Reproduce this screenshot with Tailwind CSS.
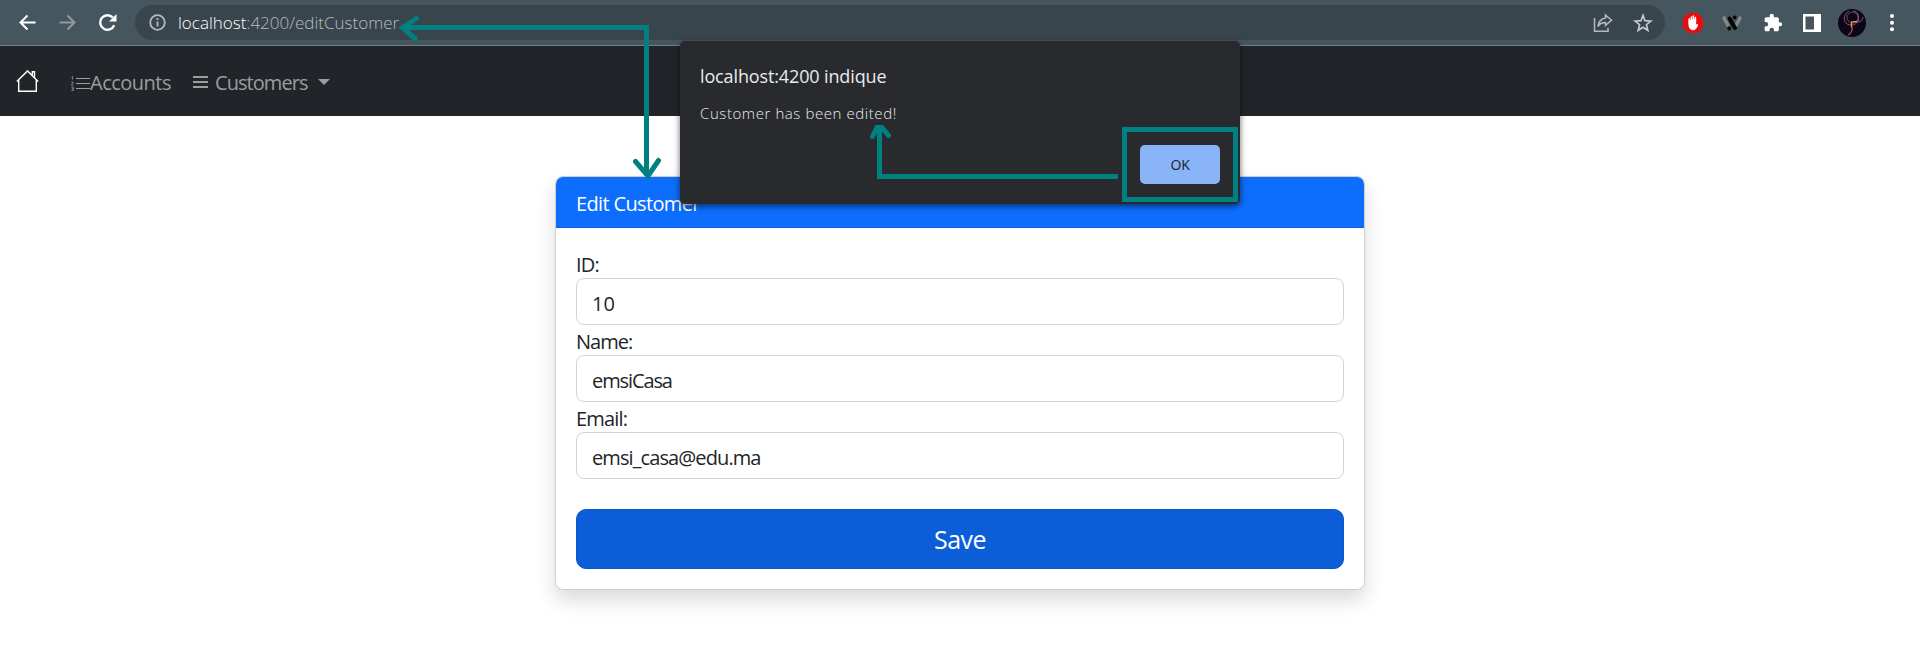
<!DOCTYPE html>
<html lang="en">
<head>
<meta charset="utf-8">
<title>Edit Customer</title>
<script src="https://cdn.jsdelivr.net/npm/@tailwindcss/browser@4"></script>
</head>
<body class="relative h-[667px] w-[1920px] overflow-hidden bg-white font-['Open_Sans','Noto_Sans',sans-serif] text-[#212529]">

<!-- Browser toolbar -->
<header class="flex h-[46px] items-start border-b border-[#6d8288] bg-[#45565f] pt-[5px]">
  <div class="flex h-[35px] w-[135px] items-center pl-[17px]">
    <svg class="h-5 w-5" viewBox="0 0 20 20" fill="none" stroke="#fff" stroke-width="2"><path d="M18.500 9.500H3.500M10.500 2.500L3.500 9.500l7 7"/></svg>
    <svg class="ml-5 h-5 w-5" viewBox="0 0 20 20" fill="none" stroke="#8f999e" stroke-width="2"><path d="M2.500 9.500H17.500M10.500 2.500l7 7-7 7"/></svg>
    <svg class="ml-5 h-5 w-5" viewBox="0 0 20 20" fill="none" stroke="#fff" stroke-width="2.400"><path d="M17.200 12.300A7.300 7.300 0 1 1 15.700 4.400"/><path d="M19.500 1v7.500H12z" fill="#fff" stroke="none"/></svg>
  </div>
  <div class="flex h-[35px] w-[1530px] items-center rounded-full bg-[#39454c] pr-3 pl-[14px]">
    <svg class="h-[17px] w-[17px]" viewBox="0 0 17 17" fill="none" stroke="#b4babd" stroke-width="1.800"><circle cx="8.500" cy="8.500" r="7.300"/><path d="M8.500 7.500v5M8.500 4v2"/></svg>
    <div class="ml-[12px] text-[17px] leading-[35px] font-light whitespace-nowrap text-[#b5bcbf]"><span class="text-white">localhost</span>:4200/editCustomer</div>
    <svg class="ml-auto h-5 w-5" viewBox="0 0 20 20" fill="none" stroke="#b5bbbe" stroke-width="1.500"><path d="M1.500 5v13.200H15v-3.500"/><path d="M12.500 2l6 5.200-6 5.200V9.600C9 9.500 6.500 11 5 13.500 5.500 9 8 5.700 12.500 5z"/></svg>
    <svg class="ml-5 h-5 w-5" viewBox="0 0 20 20" fill="none" stroke="#c4c9cb" stroke-width="1.700"><path d="M10 2.400l2 5.300 5.800.4-4.400 3.600 1.400 5.600-4.800-3.100-4.800 3.100 1.400-5.600-4.400-3.600 5.800-.4z"/></svg>
  </div>
  <div class="flex h-[35px] items-center pl-[17px]">
    <svg class="h-[22px] w-[22px]" viewBox="0 0 22 22"><path d="M6.800 1h8.400L21 6.800v8.400L15.200 21H6.800L1 15.200V6.800z" fill="#ec0b0b"/><path d="M7 8v5c0 3 1.500 4.800 4.100 4.800 2.400 0 3.300-1.500 4.700-5-.8-.6-1.600-.2-2.200.8V7" fill="#fff" stroke="#fff" stroke-linejoin="round"/><path d="M7.300 11V6.800M9.400 11V4.900M11.400 11V4.100M13.400 11V5.500" fill="none" stroke="#fff" stroke-width="1.500" stroke-linecap="round"/></svg>
    <svg class="ml-[18px] h-[18px] w-5" viewBox="0 0 20 18" fill="none" stroke-linecap="round"><path d="M2 4l3.700 7M18 4l-3.700 7" stroke="#868686" stroke-width="3.600"/><path d="M7.500 4.500l5.500 9.500" stroke="#050505" stroke-width="4"/><path d="M12.800 3.500v.1M7.200 14.500v.1" stroke="#050505" stroke-width="3.800"/></svg>
    <svg class="ml-[21px] h-5 w-5" viewBox="0 0 24 24" fill="#fff"><path d="M20.500 11H19V7c0-1.100-.9-2-2-2h-4V3.500a2.500 2.500 0 0 0-5 0V5H4c-1.100 0-2 .9-2 2v3.800h1.500a2.700 2.700 0 0 1 0 5.400H2V20c0 1.100.9 2 2 2h3.800v-1.500a2.700 2.700 0 0 1 5.400 0V22H17c1.100 0 2-.9 2-2v-4h1.500a2.500 2.500 0 0 0 0-5z"/></svg>
    <svg class="ml-[19px] h-5 w-5" viewBox="0 0 20 20"><path fill="#fff" fill-rule="evenodd" d="M1 1h18v18H1zM3.500 3.500v13H12v-13z"/></svg>
    <svg class="ml-4 h-7 w-7" viewBox="0 0 28 28" fill="none"><circle cx="14" cy="14" r="14" fill="#0c0618"/><circle cx="14.500" cy="8.500" r="5.500" stroke="#665a70"/><path d="M11 2C4 6 5 15 12 16c5 .5 10-3 8.500-9C20 4 18 2 15 2" stroke="#8a5563"/><path d="M20 13c3 0 4.500-2 5-5" stroke="#795877"/><path d="M14 18c1 4-1 6-3.500 8" stroke="#c95a5d" stroke-width="1.200"/><path d="M13.500 18.500V13l6-.5" stroke="#e69739" stroke-width="1.300"/></svg>
    <svg class="ml-4 h-5 w-5" viewBox="0 0 20 20" fill="#fff"><circle cx="10" cy="3" r="2"/><circle cx="10" cy="9.700" r="2"/><circle cx="10" cy="16.300" r="2"/></svg>
  </div>
</header>

<!-- Navigation -->
<nav class="flex h-[70px] items-center bg-[#212529] pl-4 text-[20px] text-[#9b9d9e]">
  <svg class="h-[23px] w-[23px]" viewBox="0 0 23 23" fill="none" stroke="#fff" stroke-width="1.400"><path d="M.8 11.600L11.500.9l10.700 10.700M2.700 10v11.300h17.600V10M16.300 5.500V1.700h2.200v6"/></svg>
  <a class="ml-[31px] flex items-center pt-[3px]">
    <svg class="h-5 w-5" viewBox="0 0 20 20" fill="none" stroke="#9b9d9e"><path d="M6 5.500h14M6 10.500h14M6 15.500h14"/><path stroke-width=".8" d="M1.500 4.500l1-1v3M1.300 9h1.800v1.200L1.300 12h2M1.300 14h2v3.500h-2M1.800 15.700h1.500"/></svg>
    <span class="tracking-[-0.5px]">Accounts</span>
  </a>
  <a class="ml-[22px] flex items-center pt-[3px]">
    <svg class="h-[13px] w-[15px]" viewBox="0 0 15 13" fill="#9b9d9e"><path d="M0 0h15v2H0zM0 5h15v2H0zM0 10h15v2H0z"/></svg>
    <span class="ml-[7px] tracking-[-0.95px]">Customers</span>
    <span class="mb-[2px] ml-[10px] border-x-[6px] border-t-[6px] border-x-transparent border-t-[#9b9d9e]"></span>
  </a>
</nav>

<!-- Customer form -->
<main class="flex justify-center pt-[60px]">
  <section class="w-[810px] rounded-lg border border-[#cfcfcf] bg-white shadow-[0_10px_20px_rgba(0,0,0,0.15)]">
    <h1 class="h-[51px] rounded-t-[7px] border-b border-[#0b5fd9] bg-[#0d6efd] pl-5 text-[20px] leading-[53px] tracking-[-0.65px] text-white">Edit Customer</h1>
    <form class="flex flex-col px-5 pt-[20px] pb-5 text-[20px]">
      <label class="h-[30px] leading-[34px] tracking-[-0.8px]">ID:</label>
      <div class="h-[47px] rounded-lg border border-[#ced4da] px-[15px] leading-[50px]">10</div>
      <label class="h-[30px] leading-[33px] tracking-[-1px]">Name:</label>
      <div class="h-[47px] rounded-lg border border-[#ced4da] px-[15px] leading-[50px] tracking-[-1.1px]">emsiCasa</div>
      <label class="h-[30px] leading-[33px] tracking-[-0.8px]">Email:</label>
      <div class="h-[47px] rounded-lg border border-[#ced4da] px-[15px] leading-[50px] tracking-[-0.9px]">emsi_casa@edu.ma</div>
      <button type="button" class="mt-[30px] h-[60px] rounded-[10px] border border-[#0a58ca] bg-[#0b5ed7] text-[25px] leading-[58px] tracking-[-0.5px] text-white">Save</button>
    </form>
  </section>
</main>

<!-- Alert dialog -->
<div role="alertdialog" class="absolute top-[41px] left-[680px] flex h-[163px] w-[560px] flex-col rounded-[5px] bg-[#292a2d] pt-[21px] pr-5 pb-5 pl-5 text-[#e8eaed] shadow-[0_2px_6px_rgba(0,0,0,0.6)]">
  <div class="h-[30px] text-[18px] leading-[28px] tracking-[-0.13px] whitespace-nowrap">localhost:4200 indique</div>
  <div class="mt-[8px] h-[26px] text-[15px] leading-[27px] font-light tracking-[0.58px] whitespace-nowrap">Customer has been edited!</div>
  <button type="button" class="mt-auto h-[39px] w-[80px] self-end rounded-[5px] bg-[#8ab4f8] text-[14px] leading-[37px] font-medium tracking-[-0.3px] text-[#202124]">OK</button>
</div>

<!-- Annotations -->
<div class="absolute top-[127px] left-[1122px] h-[75px] w-[116px] border-5 border-[#008080]"></div>
<svg class="absolute top-0 left-0 h-[220px] w-[1240px]" viewBox="0 0 1240 220" fill="none" stroke="#008080" stroke-width="5">
  <path d="M404 27.500H646.500V176"/>
  <path stroke-linecap="round" d="M416.500 18.500L402.500 27.500L415 38.500M635.500 161.500L648 176L658.500 160.500"/>
  <path d="M1118 176.500H879.500V128"/>
  <path stroke-linecap="round" d="M872.500 136.500L877 127.500H882L888.500 135.500"/>
</svg>
</body>
</html>
